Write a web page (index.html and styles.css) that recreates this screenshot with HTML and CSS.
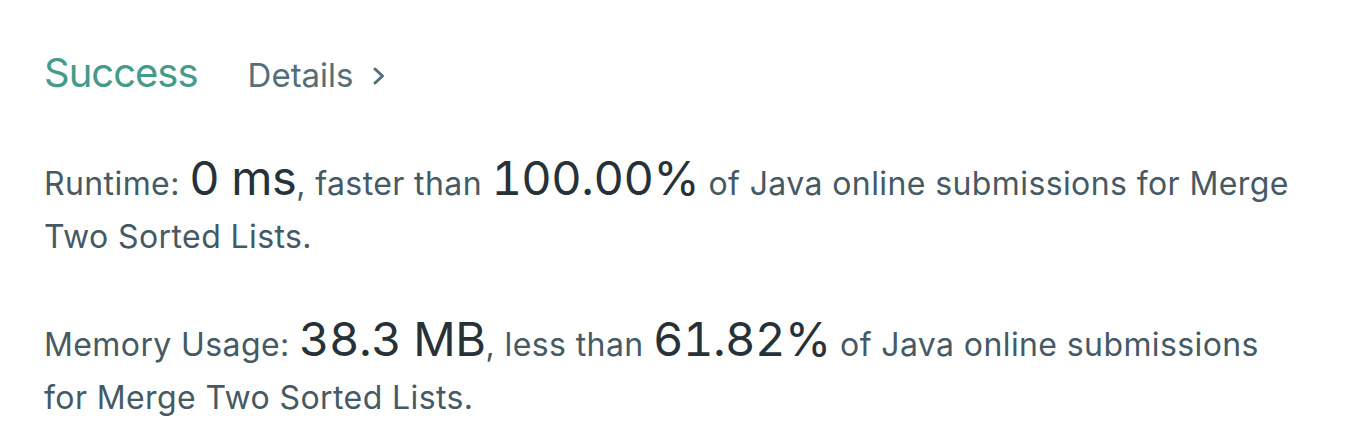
FILE: index.html
```html
<!DOCTYPE html>
<html lang="en">
<head>
<meta charset="utf-8">
<title>Submission Result</title>
<link rel="stylesheet" href="styles.css">
</head>
<body>
<div class="result">
  <div class="result-header">
    <span class="status">Success</span>
    <a class="details" href="#">Details
      <svg class="chevron" width="14" height="20" viewBox="0 0 14 20" aria-hidden="true">
        <path d="M3 3 L10.5 10 L3 17" fill="none" stroke="currentColor" stroke-width="3" stroke-linecap="round" stroke-linejoin="round"/>
      </svg>
    </a>
  </div>
  <div class="stats">
    <p class="stat">Runtime: <span class="num">0 ms</span>, faster than <span class="num">100.00%</span> of Java online submissions for Merge Two Sorted Lists.</p>
    <p class="stat">Memory Usage: <span class="num">38.3 MB</span>, less than <span class="num">61.82%</span> of Java online submissions for Merge Two Sorted Lists.</p>
  </div>
</div>
</body>
</html>
```
FILE: styles.css
```css
html, body {
  margin: 0;
  padding: 0;
  background: #ffffff;
}

body {
  font-family: Inter, "Noto Sans", "Liberation Sans", sans-serif;
}

.result {
  width: 1248px;
  padding: 48px 0 0 44px;
}

.result-header {
  display: flex;
  align-items: baseline;
  gap: 50px;
  height: 56px;
}

.status {
  font-size: 40px;
  letter-spacing: -1px;
  color: #449b89;
  line-height: 50px;
}

.details {
  display: inline-flex;
  align-items: center;
  gap: 18px;
  font-size: 33px;
  color: #546e7a;
  text-decoration: none;
  line-height: 50px;
}

.chevron {
  display: block;
  position: relative;
  top: 1px;
}

.stats {
  display: flex;
  flex-direction: column;
  gap: 52px;
  margin-top: 50px;
  color: #455a64;
}

.stat {
  margin: 0;
  font-size: 32px;
  letter-spacing: 0.4px;
  line-height: 53px;
}

.num {
  font-size: 47px;
  line-height: 1;
  color: #263238;
  font-variant-numeric: tabular-nums;
  letter-spacing: -0.5px;
}
```
